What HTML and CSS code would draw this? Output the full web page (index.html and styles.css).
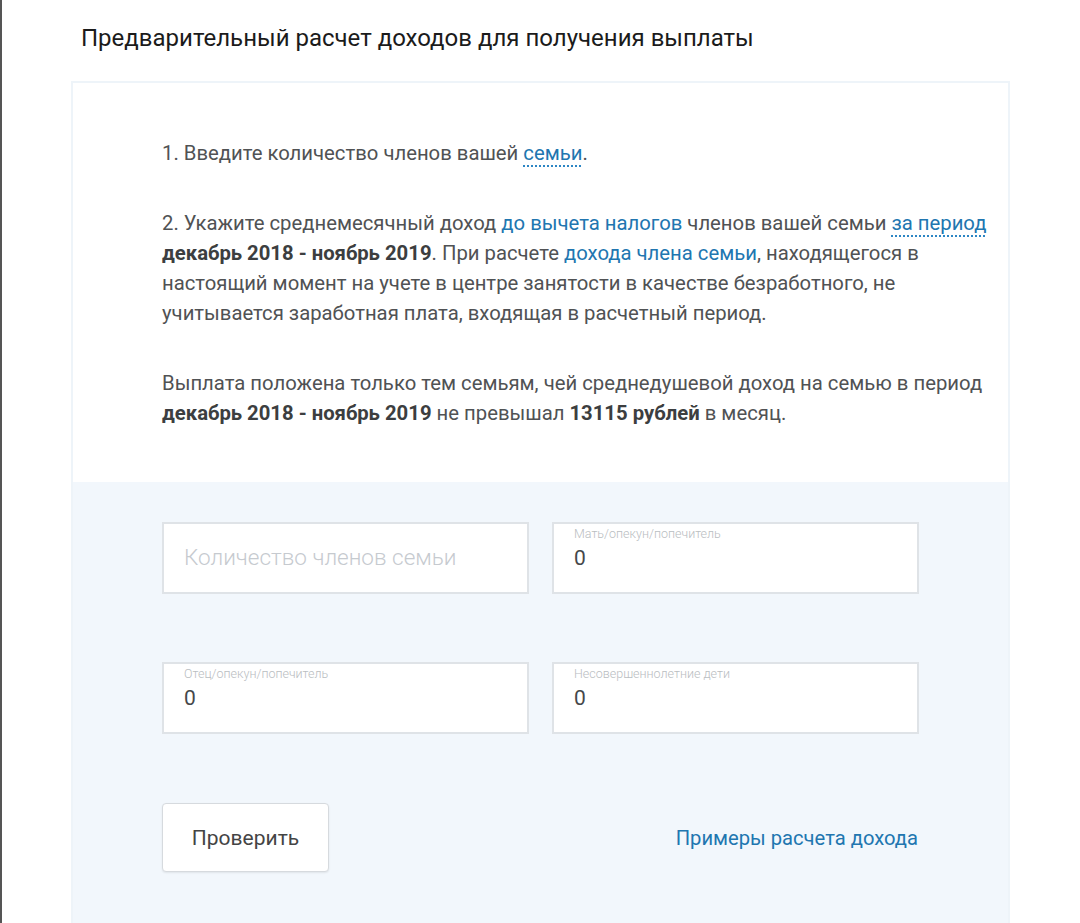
FILE: index.html
```html
<!DOCTYPE html>
<html lang="ru">
<head>
    <meta charset="UTF-8">
    <meta name="viewport" content="width=device-width, initial-scale=1.0">
    <title>Предварительный расчет доходов</title>
    <link rel="stylesheet" href="styles.css">
</head>
<body>
    <div class="page">
        <h1 class="title">Предварительный расчет доходов для получения выплаты</h1>

        <div class="card">
            <div class="card-info">
                <p>1. Введите количество членов вашей <a class="hint" href="#">семьи</a>.</p>
                <p>2. Укажите среднемесячный доход <a href="#">до вычета налогов</a> членов вашей семьи <a class="hint" href="#">за период</a>
                    <b>декабрь 2018 - ноябрь 2019</b>. При расчете <a href="#">дохода члена семьи</a>, находящегося в
                    настоящий момент на учете в центре занятости в качестве безработного, не
                    учитывается заработная плата, входящая в расчетный период.</p>
                <p>Выплата положена только тем семьям, чей среднедушевой доход на семью в период
                    <b>декабрь 2018 - ноябрь 2019</b> не превышал <b>13115 рублей</b> в месяц.</p>
            </div>

            <div class="card-form">
                <div class="fields">
                    <label class="field">
                        <input type="text" placeholder="Количество членов семьи">
                    </label>
                    <label class="field">
                        <span class="field-label">Мать/опекун/попечитель</span>
                        <input type="text" value="0">
                    </label>
                    <label class="field">
                        <span class="field-label">Отец/опекун/попечитель</span>
                        <input type="text" value="0">
                    </label>
                    <label class="field">
                        <span class="field-label">Несовершеннолетние дети</span>
                        <input type="text" value="0">
                    </label>
                </div>

                <div class="actions">
                    <button class="btn">Проверить</button>
                    <a class="examples" href="#">Примеры расчета дохода</a>
                </div>
            </div>
        </div>
    </div>
</body>
</html>
```

FILE: styles.css
```css
body {
    margin: 0;
    padding: 0;
    background: #fff;
    font-family: Roboto, "Noto Sans", sans-serif;
}

.page {
    min-height: 923px;
    box-sizing: border-box;
    border-left: 2px solid #555;
    padding: 0 70px 0 69px;
}

.title {
    margin: 0;
    padding: 24px 0 0 10px;
    font-size: 24px;
    line-height: 28px;
    font-weight: 400;
    color: #1b1b1b;
}

.card {
    margin-top: 29px;
    width: 939px;
    box-sizing: border-box;
    border: 2px solid #eef4f9;
    border-bottom: none;
}

.card-info {
    padding: 55px 18px 54px 89px;
    color: #505254;
    font-size: 20.3px;
    line-height: 30px;
}

.card-info p {
    margin: 0 0 40px 0;
}

.card-info p:last-child {
    margin-bottom: 0;
}

.card-info b {
    color: #3c3e40;
    font-weight: 700;
}

.card-info a {
    color: #2176b0;
    text-decoration: none;
}

.card-info a.hint {
    text-decoration: underline dotted #2d86c4;
    text-decoration-thickness: 2px;
    text-underline-offset: 5px;
}

.card-form {
    background: #f2f7fc;
    padding: 40px 90px 60px 89px;
}

.fields {
    display: grid;
    grid-template-columns: 367px 367px;
    column-gap: 23px;
    row-gap: 68px;
}

.field {
    display: flex;
    flex-direction: column;
    justify-content: center;
    height: 72px;
    box-sizing: border-box;
    border: 2px solid #dfe3e7;
    background: #fff;
    padding: 0 20px;
    position: relative;
}

.field-label {
    position: absolute;
    top: 2px;
    left: 20px;
    font-size: 12.5px;
    font-weight: 300;
    color: #b9bdc1;
}

.field input {
    border: none;
    outline: none;
    padding: 0;
    margin: 0;
    width: 100%;
    background: transparent;
    font-family: Roboto, sans-serif;
    font-size: 21px;
    color: #45474a;
}

.field input::placeholder {
    font-weight: 300;
    font-size: 22.5px;
    color: #c6cacf;
}

.actions {
    margin-top: 69px;
    display: flex;
    justify-content: space-between;
    align-items: center;
}

.btn {
    width: 167px;
    height: 69px;
    background: #fff;
    border: 1px solid #d6dade;
    border-radius: 4px;
    box-shadow: 0 1px 2px rgba(0, 0, 0, 0.08);
    font-family: Roboto, sans-serif;
    font-size: 21px;
    color: #444;
}

.examples {
    font-size: 20.2px;
    color: #2176b0;
    text-decoration: none;
}
```
